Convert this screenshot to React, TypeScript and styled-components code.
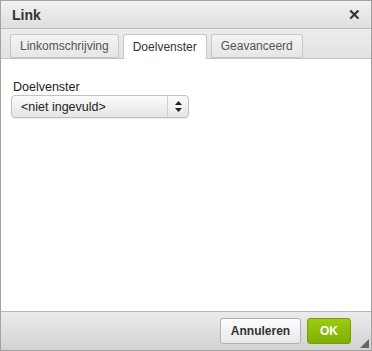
import * as React from 'react';
import styled, { createGlobalStyle } from 'styled-components';

const GlobalStyle = createGlobalStyle`
  html, body {
    margin: 0;
    padding: 0;
    background: #fff;
  }
  body {
    font-family: "Liberation Sans", Arial, sans-serif;
  }
`;

const Dialog = styled.div`
  box-sizing: border-box;
  width: 372px;
  height: 351px;
  border: 1px solid #a3a3a3;
  display: flex;
  flex-direction: column;
  background: #fff;
  color: #333;
`;

const Header = styled.div`
  height: 27px;
  flex: none;
  display: flex;
  align-items: center;
  justify-content: space-between;
  padding: 0 10px 0 11px;
  background: linear-gradient(#f2f2f2, #dedede);
  border-bottom: 1px solid #bdbdbd;
`;

const Title = styled.span`
  font-size: 14px;
  font-weight: bold;
  color: #333;
`;

const Close = styled.span`
  font-size: 15px;
  font-weight: bold;
  color: #333;
  line-height: 1;
`;

const TabBar = styled.div`
  flex: none;
  display: flex;
  gap: 4px;
  align-items: flex-end;
  padding: 6px 9px 0;
  height: 30px;
  box-sizing: border-box;
  background: linear-gradient(#ececec, #e2e2e2);
  border-bottom: 1px solid #c3c3c3;
`;

const Tab = styled.div<{ $active?: boolean }>`
  box-sizing: border-box;
  height: ${(p) => (p.$active ? '25px' : '24px')};
  margin-bottom: ${(p) => (p.$active ? '-1px' : '0')};
  padding: 0 9px;
  display: flex;
  align-items: center;
  font-size: 12px;
  color: ${(p) => (p.$active ? '#333' : '#555')};
  background: ${(p) => (p.$active ? '#fff' : 'linear-gradient(#f4f4f4, #e6e6e6)')};
  border: 1px solid #c6c6c6;
  border-bottom: ${(p) => (p.$active ? 'none' : '1px solid #c6c6c6')};
  border-radius: 3px 3px 0 0;
`;

const Panel = styled.div`
  flex: 1;
  padding: 21px 10px 0;
  background: #fff;
`;

const Label = styled.div`
  font-size: 12.5px;
  color: #222;
  margin-bottom: 1px;
  padding-left: 2px;
`;

const Select = styled.div`
  box-sizing: border-box;
  width: 178px;
  height: 23px;
  display: flex;
  align-items: stretch;
  border: 1px solid #c2c2c2;
  border-radius: 4px;
  background: linear-gradient(#fbfbfb, #e6e6e6);
  box-shadow: 0 1px 1px rgba(0, 0, 0, 0.08);
`;

const SelectValue = styled.div`
  flex: 1;
  display: flex;
  align-items: center;
  padding-left: 9px;
  font-size: 12.5px;
  color: #222;
`;

const SelectArrow = styled.div`
  width: 20px;
  border-left: 1px solid #d0d0d0;
  display: flex;
  align-items: center;
  justify-content: center;
`;

const Footer = styled.div`
  flex: none;
  height: 39px;
  box-sizing: border-box;
  border-top: 1px solid #b8b8b8;
  background: linear-gradient(#ebebeb, #d2d2d2);
  display: flex;
  align-items: center;
  justify-content: flex-end;
  gap: 6px;
  padding: 0 20px 0 0;
  position: relative;
`;

const Button = styled.div<{ $primary?: boolean }>`
  box-sizing: border-box;
  height: 26px;
  display: flex;
  align-items: center;
  justify-content: center;
  width: ${(p) => (p.$primary ? '44px' : '81px')};
  font-size: 12px;
  font-weight: bold;
  border-radius: 3px;
  color: ${(p) => (p.$primary ? '#fff' : '#333')};
  border: 1px solid ${(p) => (p.$primary ? '#7a9e08' : '#b2b2b2')};
  background: ${(p) =>
    p.$primary ? 'linear-gradient(#9bcb13, #7fae03)' : 'linear-gradient(#fdfdfd, #e8e8e8)'};
`;

const Grip = styled.svg`
  position: absolute;
  right: 2px;
  bottom: 2px;
`;

export default function App() {
  return (
    <>
      <GlobalStyle />
      <Dialog>
        <Header>
          <Title>Link</Title>
          <Close>✕</Close>
        </Header>
        <TabBar>
          <Tab>Linkomschrijving</Tab>
          <Tab $active>Doelvenster</Tab>
          <Tab>Geavanceerd</Tab>
        </TabBar>
        <Panel>
          <Label>Doelvenster</Label>
          <Select>
            <SelectValue>&lt;niet ingevuld&gt;</SelectValue>
            <SelectArrow>
              <svg width="7" height="11" viewBox="0 0 7 11">
                <path d="M3.5 0 L7 4 L0 4 Z" fill="#222" />
                <path d="M3.5 11 L7 7 L0 7 Z" fill="#222" />
              </svg>
            </SelectArrow>
          </Select>
        </Panel>
        <Footer>
          <Button>Annuleren</Button>
          <Button $primary>OK</Button>
          <Grip width="9" height="9" viewBox="0 0 9 9">
            <path d="M9 0 L9 9 L0 9 Z" fill="#666" />
          </Grip>
        </Footer>
      </Dialog>
    </>
  );
}
